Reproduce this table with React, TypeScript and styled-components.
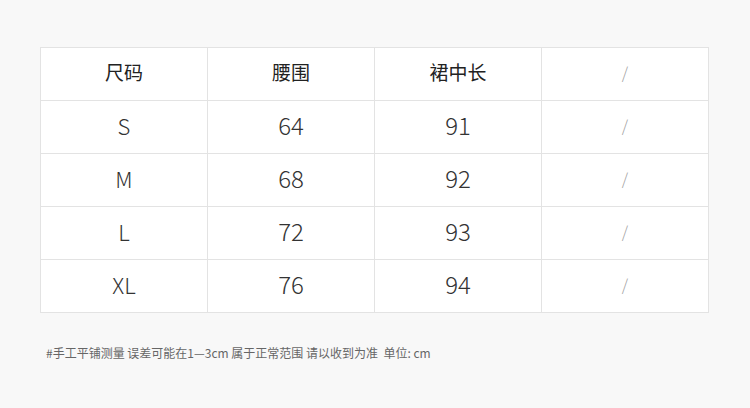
import React from "react";
import styled, { createGlobalStyle } from "styled-components";

const GlobalStyle = createGlobalStyle`
  html, body {
    margin: 0;
    padding: 0;
    background: #f8f8f8;
  }
  body {
    font-family: "Noto Sans CJK SC", "Noto Sans", sans-serif;
  }
`;

const Page = styled.div`
  width: 750px;
  height: 408px;
  box-sizing: border-box;
  padding: 47px 0 0 40px;
  background: #f8f8f8;
`;

const Table = styled.div`
  display: grid;
  grid-template-columns: repeat(4, 167px);
  grid-auto-rows: 53px;
  width: 669px;
  box-sizing: border-box;
  background: #fff;
  border-top: 1px solid #e3e3e3;
  border-left: 1px solid #e3e3e3;
`;

type Kind = "head" | "letter" | "num" | "slash";

const sizes: Record<Kind, string> = {
  head: "19px",
  letter: "22px",
  num: "24px",
  slash: "16px",
};

const Cell = styled.div<{ $kind: Kind }>`
  display: flex;
  align-items: center;
  justify-content: center;
  padding-bottom: 5px;
  box-sizing: border-box;
  border-right: 1px solid #e3e3e3;
  border-bottom: 1px solid #e3e3e3;
  color: ${(p) => (p.$kind === "slash" ? "#a0a0a0" : p.$kind === "head" ? "#222" : "#333")};
  font-size: ${(p) => sizes[p.$kind]};
  font-weight: ${(p) => (p.$kind === "head" ? 400 : p.$kind === "slash" ? 200 : 300)};
`;

const Note = styled.div`
  margin: 31px 0 0 6px;
  font-size: 12px;
  color: #666;
  white-space: pre;
`;

const head = ["尺码", "腰围", "裙中长", "/"];
const rows = [
  ["S", "64", "91", "/"],
  ["M", "68", "92", "/"],
  ["L", "72", "93", "/"],
  ["XL", "76", "94", "/"],
];

const kindOf = (ci: number): Kind => (ci === 0 ? "letter" : ci === 3 ? "slash" : "num");

export default function App() {
  return (
    <>
      <GlobalStyle />
      <Page>
        <Table>
          {head.map((h, i) => (
            <Cell key={"h" + i} $kind={i === 3 ? "slash" : "head"}>
              {h}
            </Cell>
          ))}
          {rows.map((r, ri) =>
            r.map((c, ci) => (
              <Cell key={ri + "-" + ci} $kind={kindOf(ci)}>
                {c}
              </Cell>
            ))
          )}
        </Table>
        <Note>#手工平铺测量 误差可能在1—3cm 属于正常范围 请以收到为准  单位: cm</Note>
      </Page>
    </>
  );
}
